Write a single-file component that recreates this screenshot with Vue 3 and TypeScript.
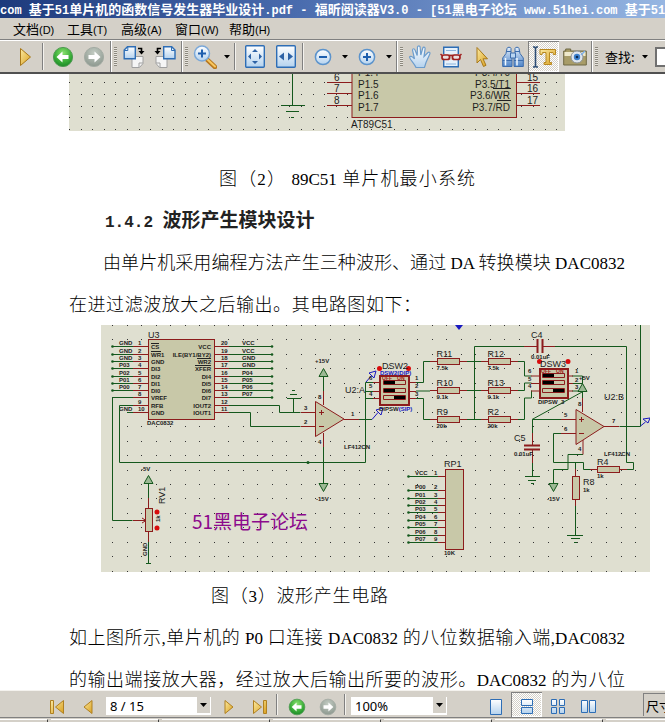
<script setup lang="ts">
import { ref } from 'vue'

interface Run { text: string; latin: boolean }
interface Pin { y: number; net?: string; num: string; name?: string }
interface Resistor { name: string; value: string; x: number; y: number }

// Splits mixed text so that Latin and Chinese runs can use different faces.
function runs(text: string): Run[] {
  return text
    .split(/([\x20-\x7e]+)/)
    .filter((part) => part.length > 0)
    .map((part) => ({ text: part, latin: /^[\x20-\x7e]/.test(part) }))
}

function dotGrid(x0: number, y0: number, stepX: number, stepY: number, cols: number, rows: number): string {
  let d = ''
  for (let r = 0; r < rows; r++) {
    for (let c = 0; c < cols; c++) {
      d += `M${Math.round(x0 + c * stepX)} ${Math.round(y0 + r * stepY)}h1v1h-1z`
    }
  }
  return d
}

const title = runs('com 基于51单片机的函数信号发生器毕业设计.pdf - 福昕阅读器V3.0 - [51黑电子论坛 www.51hei.com 基于51单片机的函数信号发生器毕业设计.pdf]')
const menus = ['文档(D)', '工具(T)', '高级(A)', '窗口(W)', '帮助(H)'].map(runs)

const captionOne = runs('图（2） 89C51 单片机最小系统')
const heading = runs('1.4.2 波形产生模块设计')
const lineOne = runs('由单片机采用编程方法产生三种波形、通过 DA 转换模块 DAC0832')
const lineTwo = runs('在进过滤波放大之后输出。其电路图如下：')
const captionTwo = runs('图（3）波形产生电路')
const lineThree = runs('如上图所示,单片机的 P0 口连接 DAC0832 的八位数据输入端,DAC0832')
const lineFour = runs('的输出端接放大器，经过放大后输出所要的波形。DAC0832 的为八位')

const page = ref('8 / 15')
const zoomLevel = ref('100%')
const query = ref('')

const dotsOne = dotGrid(69, 82, 11.6, 11.75, 43, 5)
const dotsTwo = dotGrid(112, 325, 14.53, 14.45, 37, 18)

const rows = [346.5, 354.5, 361.5, 368.5, 376.5, 383.5, 390.5, 397.5, 405.5, 412.5]
const leftNames = ['CS', 'WR1', 'GND', 'DI3', 'DI2', 'DI1', 'DI0', 'VREF', 'RFB', 'GND']
const leftNets = ['GND', 'GND', 'GND', 'P03', 'P02', 'P01', 'P00']
const rightNames = ['VCC', 'ILE(BY1/BY2)', 'WR2', 'XFER', 'DI4', 'DI5', 'DI6', 'DI7', 'IOUT2', 'IOUT1']
const rightNets = ['VCC', 'VCC', 'GND', 'GND', 'P04', 'P05', 'P06', 'P07']
const leftPins: Pin[] = rows.map((y, i) => ({ y, num: String(i + 1), name: leftNames[i], net: leftNets[i] }))
const rightPins: Pin[] = rows.map((y, i) => ({ y, num: String(20 - i), name: rightNames[i], net: rightNets[i] }))

const packYs = [476.5, 490.5, 498.5, 505.5, 512.5, 520.5, 527.5, 535.5, 542.5]
const packPins: Pin[] = packYs.map((y, i) => ({ y, num: String(i + 1), net: i === 0 ? 'VCC' : `P0${i - 1}` }))

const resistors: Resistor[] = [
  { name: 'R11', value: '7.5k', x: 437.5, y: 361.5 },
  { name: 'R10', value: '9.1k', x: 437.5, y: 390.5 },
  { name: 'R9', value: '20k', x: 437.5, y: 419.5 },
  { name: 'R12', value: '7.5k', x: 488.5, y: 361.5 },
  { name: 'R13', value: '9.1k', x: 488.5, y: 390.5 },
  { name: 'R2', value: '20k', x: 488.5, y: 419.5 },
]
const mcuLeft: Pin[] = [
  { y: 82.5, num: '6', name: 'P1.5' },
  { y: 93.5, num: '7', name: 'P1.6' },
  { y: 105.5, num: '8', name: 'P1.7' },
]
const mcuRight: Pin[] = [
  { y: 82.5, num: '15', name: 'P3.5/T1' },
  { y: 93.5, num: '16', name: 'P3.6/WR' },
  { y: 105.5, num: '17', name: 'P3.7/RD' },
]
</script>

<template>
  <div class="reader" lang="zh-CN">
    <svg class="defs" aria-hidden="true">
      <defs>
        <linearGradient id="gold" x1="0" y1="0" x2="1" y2="1"><stop offset="0" stop-color="#fbe9a0" /><stop offset="1" stop-color="#d9a020" /></linearGradient>
        <linearGradient id="ice" x1="0" y1="0" x2="0" y2="1"><stop offset="0" stop-color="#ffffff" /><stop offset="1" stop-color="#b4d2ee" /></linearGradient>
        <linearGradient id="steel" x1="0" y1="0" x2="0" y2="1"><stop offset="0" stop-color="#e4f0fc" /><stop offset="1" stop-color="#4f84c8" /></linearGradient>
        <radialGradient id="leaf" cx=".5" cy=".3" r=".7"><stop offset="0" stop-color="#8be070" /><stop offset=".6" stop-color="#3db03a" /><stop offset="1" stop-color="#1c8a28" /></radialGradient>
        <radialGradient id="ash" cx=".5" cy=".3" r=".7"><stop offset="0" stop-color="#c3ccc3" /><stop offset="1" stop-color="#8d988f" /></radialGradient>
        <symbol id="i-back" viewBox="0 0 22 22"><circle cx="11" cy="11" r="9.6" fill="url(#leaf)" stroke="#4f9a52" /><path d="M4.500 11l6-5.500v3.500h6v4h-6v3.500z" fill="#fff" /></symbol>
        <symbol id="i-forward" viewBox="0 0 22 22"><circle cx="11" cy="11" r="9.600" fill="url(#ash)" stroke="#a3aba3" /><path d="M17.500 11l-6-5.500v3.500h-6v4h6v3.500z" fill="#fff" /></symbol>
        <symbol id="i-caret" viewBox="0 0 6 4"><path d="M0 0h6L3 3.500z" fill="#000" /></symbol>
      </defs>
    </svg>

    <header class="titlebar">
      <h1><span v-for="(r, i) in title" :key="i" :class="{ latin: r.latin }">{{ r.text }}</span></h1>
    </header>

    <nav class="menubar" aria-label="菜单">
      <button v-for="(m, i) in menus" :key="i" type="button"><span v-for="(r, j) in m" :key="j" :class="{ latin: r.latin }">{{ r.text }}</span></button>
    </nav>

    <div class="toolbar">
      <div class="group first">
        <button class="tool" type="button" aria-label="播放"><svg width="13" height="20" viewBox="0 0 13 20"><path d="M1.500 1.500v17l10-8.500z" fill="url(#gold)" stroke="#a87818" /></svg></button>
        <i class="sep"></i>
        <button class="tool" type="button" aria-label="后退"><svg width="22" height="22"><use href="#i-back" /></svg></button>
        <button class="tool" type="button" aria-label="前进"><svg width="22" height="22"><use href="#i-forward" /></svg></button>
      </div>
      <div class="group">
        <i class="grip"></i>
        <button class="tool" type="button" aria-label="顺时针旋转">
          <svg width="22" height="22" viewBox="0 0 22 22"><path d="M9 10.500h11v7l-3.500 4H9z" fill="#f5f5f5" stroke="#a0a0a0" /><path d="M20 17h-4v4" fill="none" stroke="#a0a0a0" /><path d="M4.500.7h7.800v12.100H1.200V4z" fill="url(#ice)" stroke="#2d6db5" stroke-width="1.400" /><path d="M1.200 4.500h3.600V1" fill="none" stroke="#2d6db5" /><path d="M15 2.500h3.500v3" fill="none" stroke="#000" stroke-width="1.600" /><path d="M15.500 5h6l-3 3.500z" /></svg>
        </button>
        <button class="tool" type="button" aria-label="逆时针旋转">
          <svg width="22" height="22" viewBox="0 0 22 22"><path d="M2 10.500h11v11H5.500l-3.500-4z" fill="#f5f5f5" stroke="#a0a0a0" /><path d="M2 17h4v4" fill="none" stroke="#a0a0a0" /><path d="M9.700.7h8l3.300 3.300v8.800H9.700z" fill="url(#ice)" stroke="#2d6db5" stroke-width="1.400" /><path d="M17.500 1v3.500H21" fill="none" stroke="#2d6db5" /><path d="M7 2.500H3.500v3" fill="none" stroke="#000" stroke-width="1.600" /><path d="M.5 5h6l-3 3.500z" /></svg>
        </button>
      </div>
      <div class="group">
        <i class="grip"></i>
        <button class="tool" type="button" aria-label="放大镜">
          <svg width="24" height="24" viewBox="0 0 24 24"><path d="M14 14.500l8 7.500" stroke="#b87820" stroke-width="4.500" stroke-linecap="round" /><path d="M15 15l7 6.500" stroke="#f8c860" stroke-width="2" stroke-linecap="round" /><circle cx="9" cy="8.500" r="7.500" fill="url(#ice)" stroke="#7ba8d8" stroke-width="1.500" /><path d="M5 8.500h8M9 4.500v8" stroke="#1e5fae" stroke-width="2" /></svg>
        </button>
        <button class="drop" type="button" aria-label="缩放选项"><svg width="6" height="4"><use href="#i-caret" /></svg></button>
        <i class="sep"></i>
        <button class="tool" type="button" aria-label="适合页面">
          <svg width="20" height="23" viewBox="0 0 20 23"><rect x=".7" y=".7" width="18.600" height="21.600" rx="1" fill="url(#ice)" stroke="#2d6db5" stroke-width="1.400" /><path d="M10 4l3 3H7zM10 19l3-3H7zM3 11.500l3-3v6zM17 11.500l-3-3v6z" fill="#2d62a5" /></svg>
        </button>
        <button class="tool" type="button" aria-label="适合宽度">
          <svg width="20" height="23" viewBox="0 0 20 23"><rect x=".7" y=".7" width="18.600" height="21.600" rx="1" fill="url(#ice)" stroke="#2d6db5" stroke-width="1.400" /><path d="M3 11.500l5-4v8zM17 11.500l-5-4v8z" fill="#2d62a5" /></svg>
        </button>
        <i class="sep"></i>
        <button class="tool" type="button" aria-label="缩小"><svg width="18" height="18" viewBox="0 0 18 18"><circle cx="9" cy="9" r="7.600" fill="url(#ice)" stroke="#5b93cc" stroke-width="1.500" /><path d="M5 9h8" stroke="#1e5fae" stroke-width="2" /></svg></button>
        <button class="drop" type="button" aria-label="缩小选项"><svg width="6" height="4"><use href="#i-caret" /></svg></button>
        <button class="tool" type="button" aria-label="放大"><svg width="18" height="18" viewBox="0 0 18 18"><circle cx="9" cy="9" r="7.600" fill="url(#ice)" stroke="#5b93cc" stroke-width="1.500" /><path d="M5 9h8M9 5v8" stroke="#1e5fae" stroke-width="2" /></svg></button>
        <button class="drop" type="button" aria-label="放大选项"><svg width="6" height="4"><use href="#i-caret" /></svg></button>
      </div>
      <div class="group">
        <i class="grip"></i>
        <button class="tool" type="button" aria-label="手形工具">
          <svg width="24" height="24" viewBox="0 0 24 24"><path d="M8 22.500C6 18 2 15 1.500 12c.8-1.500 3-.5 5 2L4.500 5c.3-1.800 2-1.500 2.500 0l2.200 5.500L9.500 2c.5-1.600 2.200-1.600 2.600 0l.7 8 2-7c.6-1.500 2.300-1.200 2.300.5L16 11.500l4-4c1.300-1 2.500.2 1.800 1.500L18 17.500l-1.500 5z" fill="url(#ice)" stroke="#6c9ccc" stroke-width="1.200" /></svg>
        </button>
        <button class="tool" type="button" aria-label="阅读模式">
          <svg width="22" height="22" viewBox="0 0 22 22"><path d="M3.700 8V1.200h14.600V8M3.700 14v6.800h14.600V14" fill="#e6f1fb" stroke="#2d6db5" stroke-width="1.400" /><path d="M6 4.500h10M6 18h10" stroke="#8cb4dc" /><rect x="2" y="9" width="7.500" height="4.500" rx="2" fill="#e8e0e0" stroke="#a02020" stroke-width="1.700" /><rect x="12.500" y="9" width="7.500" height="4.500" rx="2" fill="#e8e0e0" stroke="#a02020" stroke-width="1.700" /><path d="M9 9.500h4M2 9.500L.500 8M20 9.500L21.500 8" stroke="#a02020" stroke-width="1.500" /></svg>
        </button>
        <button class="tool" type="button" aria-label="选择工具"><svg width="14" height="22" viewBox="0 0 14 22"><path d="M2 1.500v15.500l3.500-3.500 3 7 2.500-1.200-3-6.500h4.500z" fill="url(#gold)" stroke="#a87818" /></svg></button>
        <button class="tool" type="button" aria-label="搜索">
          <svg width="22" height="22" viewBox="0 0 22 22"><path d="M5 2.500C5 .8 9 .8 9 2.500V7l1 3v10.500H.700V12L4 7.500zM17 2.500C17 .8 13 .8 13 2.500V7l-1 3v10.500h9.300V12L18 7.500z" fill="url(#steel)" stroke="#3c6cac" /><path d="M8.500 7h5v5h-5z" fill="#b9d5f2" stroke="#3c6cac" /><path d="M4.500 5.500h4.500M13 5.500h4.500M.700 14.500h9.300M12 14.500h9.300" stroke="#3c6cac" /><path d="M3.500 12v7.500M15 12v7.500" stroke="#f4faff" stroke-width="1.500" /></svg>
        </button>
        <button class="tool on" type="button" aria-label="选择文本">
          <svg width="26" height="24" viewBox="0 0 26 24"><path d="M2 2h1.500l1 1 1-1H7M4.500 3v18M2 22h1.500l1-1 1 1H7" fill="none" stroke="#2c4c74" stroke-width="1.600" /><path d="M9 4.500h15.500v5h-2l-.5-2h-3.500v10h2v2h-7.500v-2h2V7.500H11.500l-.5 2H9z" fill="url(#gold)" stroke="#b88820" /></svg>
        </button>
        <button class="tool" type="button" aria-label="快照">
          <svg width="24" height="20" viewBox="0 0 24 20"><path d="M.7 4h2V2h5v2h15.600v14H.7z" fill="#a89c68" stroke="#6e6844" /><path d="M1.500 5h21v4h-21z" fill="#efe9cc" /><circle cx="14" cy="10" r="6" fill="#dfe6ee" stroke="#8e9498" /><circle cx="14" cy="10" r="3.200" fill="#3c80cc" /><circle cx="14" cy="10" r="1.300" fill="#0c2850" /><path d="M18 8l4-4" stroke="#7cb0ec" stroke-width="1.500" /></svg>
        </button>
      </div>
      <div class="group search">
        <i class="grip"></i>
        <label for="query">查找:</label>
        <button class="drop" type="button" aria-label="查找选项"><svg width="6" height="4"><use href="#i-caret" /></svg></button>
        <input id="query" v-model="query" type="text" />
      </div>
    </div>

    <main>
      <article class="paper">
        <figure>
          <svg class="drawing" width="496" height="57" viewBox="69 74 496 57" role="img" aria-label="89C51 单片机最小系统电路">
            <rect x="69" y="74" width="496" height="57" fill="#dfdfd0" />
            <path :d="dotsOne" fill="#333" />
            <rect x="352" y="60" width="164.500" height="57.500" class="part" />
            <path class="wire" d="M292.500 74v31.500M281 105.500h24M286 111.500h13M291 117.500h3" />
            <text class="t10" x="358" y="76">P1.4</text>
            <text class="t10 end" x="510" y="76">P3.4/T0</text>
            <g v-for="p in mcuLeft" :key="p.num">
              <path class="lead" :d="`M327 ${p.y}h25`" />
              <text class="t10" x="334" :y="p.y - 2">{{ p.num }}</text>
              <text class="t10" x="358" :y="p.y + 5">{{ p.name }}</text>
            </g>
            <g v-for="p in mcuRight" :key="p.num">
              <path class="lead" :d="`M517 ${p.y}h23`" />
              <text class="t10" x="527" :y="p.y - 2">{{ p.num }}</text>
              <text class="t10 end" x="510" :y="p.y + 5">{{ p.name }}</text>
            </g>
            <path d="M493 88.500h18M497 100.500h14" stroke="#222" />
            <text class="t10" x="351" y="128">AT89C51</text>
          </svg>
          <figcaption class="line cap-one"><span v-for="(r, i) in captionOne" :key="i" :class="{ latin: r.latin }">{{ r.text }}</span></figcaption>
        </figure>

        <h2 class="line"><span v-for="(r, i) in heading" :key="i" :class="{ latin: r.latin }">{{ r.text }}</span></h2>
        <p class="line indent"><span v-for="(r, i) in lineOne" :key="i" :class="{ latin: r.latin }">{{ r.text }}</span></p>
        <p class="line short"><span v-for="(r, i) in lineTwo" :key="i" :class="{ latin: r.latin }">{{ r.text }}</span></p>

        <figure class="circuit">
          <svg class="drawing" width="549" height="247" viewBox="101 325 549 247" role="img" aria-label="波形产生电路">
            <rect x="101" y="325" width="549" height="247" fill="#dfdfd0" />
            <path :d="dotsTwo" fill="#333" />

            <!-- DAC0832 -->
            <rect x="148.500" y="339.500" width="66" height="80" class="part" />
            <text class="t9" x="148" y="338">U3</text>
            <text class="t6" x="147" y="425">DAC0832</text>
            <g v-for="p in leftPins" :key="'l' + p.num">
              <path class="lead" :d="`M133 ${p.y}h15`" />
              <text class="t6" x="138" :y="p.y - 2">{{ p.num }}</text>
              <text class="t6" x="151" :y="p.y + 2">{{ p.name }}</text>
              <template v-if="p.net">
                <path class="wire" :d="`M112 ${p.y}h21`" />
                <circle cx="112.500" :cy="p.y" r="1.300" fill="#14581c" />
                <text class="t6" x="119" :y="p.y - 2">{{ p.net }}</text>
              </template>
            </g>
            <g v-for="p in rightPins" :key="'r' + p.num">
              <path class="lead" :d="`M215 ${p.y}h14`" />
              <text class="t6" x="221" :y="p.y - 2">{{ p.num }}</text>
              <text class="t6 end" x="211" :y="p.y + 2">{{ p.name }}</text>
              <template v-if="p.net">
                <path class="wire" :d="`M229 ${p.y}h43`" />
                <circle cx="272" :cy="p.y" r="1.300" fill="#14581c" />
                <text class="t6" x="242" :y="p.y - 2">{{ p.net }}</text>
              </template>
            </g>
            <path d="M151 343.500h8M151 351.500h10M197 358.500h14M195 365.500h16" stroke="#222" />
            <text class="t6" x="119" y="411">GND</text>

            <!-- wiring -->
            <path class="wire" d="M133 397.500h-20.500V520.500h20M133 405.500h-13.500V462.500h246V382.500h8M127 412.500h6M229 405.500h50.500v7h21M229 412.500h21.500v14h50M293.500 412v-14M287 398.500h14M290 394.500h7M292 390.500h3M365.500 391.500h8M365.500 398.500h8" />
            <circle cx="308" cy="462.500" r="1.500" fill="#14581c" />
            <path class="wire" d="M323.500 376v15M323.500 447v36M359 419.500h13M416 382.500h7.500v-21h7M416 391h14M416 398.500h7.500v21h7M467 361.500h14M467 390.500h14M467 419.500h14M474.500 419.500V346.500h50M555 346.500h71.500v116h7v7h-7M518 361.500h6.500v14.500h7M518 390.500h6.500v-7.500h7M518 419.500h6.500v-21.500h7v-7.500h0" />
            <path class="wire" d="M640.500 325v101.500h-21M582.500 376v22M572 376h10.500M572 383.500h10.500M572 391h10.500M583 391.500l-51 28M561 419.500h-28.500v14M561 433.500h-7.500v29h30v7h7M583 454.500h-15v15h-14.500v14M532.500 463v13.500M525 476.500h15M528 480.500h8M531 483.500h3M575.500 506v29M567 535.500h16M571 538.500h9M574 542.500h3M148.500 484v14M148.500 542v21M146 563.500h5M575.500 462v7" />
            <path class="lead" d="M301 412.500h15M301 426.500h15M323.500 391v14M323.500 433v14M344 419.500h15M373 382.500h7M373 391.500h7M373 398.500h7M409 382.500h7M409 391.500h7M409 398.500h7M430 361.500h8M430 390.500h8M430 419.500h8M460 361.500h7M460 390.500h7M460 419.500h7M481 361.500h8M481 390.500h8M481 419.500h8M511 361.500h7M511 390.500h7M511 419.500h7M524 346.500h13M543 346.500h12M531 376h9M531 383.500h9M531 391h9M568 376h5M568 383.500h5M568 391h5" />
            <path class="lead" d="M561 419.500h15M561 433.500h15M604 426.500h15M582.500 398v14M583 440v14.500M532.500 433v12M532.500 450v13M590 469.500h8M619 469.500h8M575.500 469v8M575.500 499v7M133 520.500h12M148.500 498v11M148.500 532v10M142 518l4 2.500-4 2.500" />
            <path d="M537.500 339v14M542.500 339v14M524 445.500h16M524 449.500h16" stroke="#8c1c1c" stroke-width="2" />

            <!-- supply arrows -->
            <path class="arrow" d="M319 376.500h9l-4.500-8zM319 483.500h9l-4.500 8zM144 483.500h9l-4.500-8zM578 391.500h9l-4.500-8zM549 483.500h9l-4.500 8z" />

            <!-- operational amplifiers -->
            <path class="part" d="M315.500 401.500v35l28.500-17.500zM576 409.500v35l28-18z" />
            <path d="M319 412.500h5M321.500 410v5M319 426.500h5M579 419.500h5M581.500 417v5M579 433.500h5" stroke="#8c1c1c" />

            <!-- resistors -->
            <g v-for="r in resistors" :key="r.name">
              <rect class="part" :x="r.x" :y="r.y - 3" width="22" height="6" />
              <text class="t9" :x="r.x - 1" :y="r.y - 5">{{ r.name }}</text>
              <text class="t6" :x="r.x - 1" :y="r.y + 8">{{ r.value }}</text>
            </g>
            <rect class="part" x="597.500" y="466.500" width="22" height="6" />
            <rect class="part" x="572.500" y="476.500" width="7" height="23" />
            <rect class="part" x="145.500" y="508.500" width="7" height="23" />

            <!-- DIP switches -->
            <g>
              <rect class="part thick" x="380" y="376" width="29" height="29" />
              <path class="part" d="M383.500 380.500h22v4h-22zM383.500 388.500h22v4h-22zM383.500 395.500h22v4h-22z" />
              <path d="M384 381h11v3h-11zM384 389h11v3h-11zM394 396h11v3h-11z" />
              <text class="t5 red" x="382" y="380">OFF</text><text class="t5 red" x="397" y="380">ON</text>
            </g>
            <g>
              <rect class="part thick" x="540" y="369" width="28" height="29" />
              <path class="part" d="M542.500 373.500h22v4h-22zM542.500 380.500h22v4h-22zM542.500 388.500h22v4h-22z" />
              <path d="M543 374h11v3h-11zM543 381h11v3h-11zM553 389h11v3h-11z" />
              <text class="t5 red" x="541" y="373">OFF</text><text class="t5 red" x="556" y="373">ON</text>
            </g>
            <path d="M379.500 368.500h0M408.500 368.500h0M539.500 361.500h0M568 361.500h0M157 512h0M157 528h0" stroke="#d80c0c" stroke-width="5" stroke-linecap="round" />

            <!-- resistor pack -->
            <rect class="part" x="445.500" y="469.500" width="18" height="80" />
            <g v-for="p in packPins" :key="'p' + p.num">
              <path class="wire" :d="`M408 ${p.y}h30`" />
              <path class="lead" :d="`M438 ${p.y}h7`" />
              <circle cx="408.500" :cy="p.y" r="1.300" fill="#14581c" />
              <text class="t6" x="415" :y="p.y - 2">{{ p.net }}</text>
              <text class="t6" x="434" :y="p.y - 2">{{ p.num }}</text>
            </g>

            <!-- probes -->
            <path d="M366 382l6-7M369 373l7-2-2 7zM372 419.500l6-7M376 410l7-2-2 7zM640.500 426l5-4M643 419l7-1-2 5z" fill="none" stroke="#1818c0" />
            <path d="M455 325h8l-4 5z" fill="#1818c0" />

            <!-- labels -->
            <text class="t9" x="382" y="369">DSW2</text>
            <text class="t6 blue" x="380" y="375">DSW2(DIP)</text>
            <text class="t6" x="379" y="411">DIPSW<tspan class="blue">(SIP)</tspan></text>
            <text class="t9" x="345" y="393">U2:A</text>
            <text class="t9" x="604" y="400">U2:B</text>
            <text class="t9" x="531" y="338">C4</text>
            <text class="t6" x="531" y="359">0.01uF</text>
            <text class="t9" x="540" y="367">DSW3</text>
            <text class="t6" x="538" y="404">DIPSW_3</text>
            <text class="t9" x="514" y="441">C5</text>
            <text class="t6" x="514" y="456">0.01uF</text>
            <text class="t9" x="597" y="465">R4</text>
            <text class="t6" x="597" y="478">1k</text>
            <text class="t9" x="583" y="485">R8</text>
            <text class="t6" x="583" y="492">1k</text>
            <text class="t9" x="444" y="467">RP1</text>
            <text class="t6" x="444" y="555">10K</text>
            <text class="t6" x="344" y="449">LF412CN</text>
            <text class="t6" x="604" y="456">LF412CN</text>
            <text class="t6" x="315" y="363">+15V</text>
            <text class="t6" x="316" y="501">-15V</text>
            <text class="t6" x="579" y="380">+5V</text>
            <text class="t6" x="547" y="501">-15V</text>
            <text class="t6" x="141" y="471">-5V</text>
            <text class="t6" x="304" y="410">3</text><text class="t6" x="304" y="424">2</text><text class="t6" x="351" y="416">1</text>
            <text class="t6" x="318" y="399">8</text><text class="t6" x="318" y="444">4</text>
            <text class="t6" x="369" y="380">6</text><text class="t6" x="369" y="388">5</text><text class="t6" x="369" y="396">4</text>
            <text class="t6" x="415" y="380">1</text><text class="t6" x="415" y="388">2</text><text class="t6" x="415" y="396">3</text>
            <text class="t6" x="528" y="373">6</text><text class="t6" x="528" y="381">5</text><text class="t6" x="528" y="388">4</text>
            <text class="t6" x="575" y="373">1</text><text class="t6" x="575" y="382">2</text><text class="t6" x="575" y="389">3</text>
            <text class="t6" x="564" y="417">5</text><text class="t6" x="564" y="431">6</text><text class="t6" x="612" y="423">7</text>
            <text class="t6" x="578" y="406">8</text><text class="t6" x="578" y="451">4</text>
            <text class="t9" transform="translate(165 504) rotate(-90)">RV1</text>
            <text class="t6" transform="translate(160 522) rotate(-90)">1k</text>
            <text class="t6" transform="translate(147 556) rotate(-90)">GND</text>
            <text class="mark" x="192" y="529">51黑电子论坛</text>
          </svg>
          <figcaption class="line cap-two"><span v-for="(r, i) in captionTwo" :key="i" :class="{ latin: r.latin }">{{ r.text }}</span></figcaption>
        </figure>

        <p class="line"><span v-for="(r, i) in lineThree" :key="i" :class="{ latin: r.latin }">{{ r.text }}</span></p>
        <p class="line"><span v-for="(r, i) in lineFour" :key="i" :class="{ latin: r.latin }">{{ r.text }}</span></p>
      </article>
    </main>

    <footer>
      <div class="pager">
        <button class="tool" type="button" aria-label="第一页"><svg width="16" height="16" viewBox="0 0 16 16"><path d="M1.500 1.500h3v13h-3zM14.500 1.500v13L6.500 8z" fill="url(#gold)" stroke="#b08020" /></svg></button>
        <button class="tool" type="button" aria-label="上一页"><svg width="10" height="16" viewBox="0 0 10 16"><path d="M9 1.500v13L1 8z" fill="url(#gold)" stroke="#b08020" /></svg></button>
        <span class="combo page">
          <select v-model="page" aria-label="页码"><option>8 / 15</option><option>9 / 15</option></select>
          <svg class="arrowbox" width="13" height="16" viewBox="0 0 13 16"><path d="M0 0h13v16H0z" fill="#d4d0c8" /><path d="M3 6h7L6.500 10z" /></svg>
        </span>
        <button class="tool" type="button" aria-label="下一页"><svg width="10" height="16" viewBox="0 0 10 16"><path d="M1 1.500v13L9 8z" fill="url(#gold)" stroke="#b08020" /></svg></button>
        <button class="tool" type="button" aria-label="最后一页"><svg width="16" height="16" viewBox="0 0 16 16"><path d="M11.500 1.500h3v13h-3zM1.500 1.500v13L9.500 8z" fill="url(#gold)" stroke="#b08020" /></svg></button>
        <i class="sep"></i>
        <button class="tool" type="button" aria-label="后退"><svg width="18" height="18"><use href="#i-back" /></svg></button>
        <button class="tool" type="button" aria-label="前进"><svg width="18" height="18"><use href="#i-forward" /></svg></button>
        <i class="sep"></i>
        <span class="combo scale">
          <select v-model="zoomLevel" aria-label="缩放比例"><option>100%</option><option>125%</option></select>
          <svg class="arrowbox" width="13" height="16" viewBox="0 0 13 16"><path d="M0 0h13v16H0z" fill="#d4d0c8" /><path d="M3 6h7L6.500 10z" /></svg>
        </span>
        <div class="views">
          <button class="tool" type="button" aria-label="单页"><svg width="14" height="16" viewBox="0 0 14 16"><path class="leaf" d="M1.500.5h11v15h-11z" /></svg></button>
          <button class="tool on" type="button" aria-label="连续"><svg width="14" height="16" viewBox="0 0 14 16"><path class="leaf" d="M1.500.5h11v6h-11zM1.500 8.500h11v6h-11z" /></svg></button>
          <button class="tool" type="button" aria-label="连续对开"><svg width="14" height="16" viewBox="0 0 14 16"><path class="leaf" d="M.5.500h5v6h-5zM8.500.500h5v6h-5zM.5 8.500h5v6h-5zM8.500 8.500h5v6h-5z" /></svg></button>
          <button class="tool" type="button" aria-label="对开"><svg width="16" height="16" viewBox="0 0 16 16"><path class="leaf" d="M.5 1.500h6v12h-6zM8.500 1.500h6v12h-6z" /></svg></button>
        </div>
        <button class="size" type="button">尺寸</button>
      </div>
      <div class="tasks"><i v-for="n in 7" :key="n"></i></div>
    </footer>
  </div>
</template>

<style>
body {
  overflow: hidden;
  background: #d4d0c8;
}
</style>

<style scoped>
.reader {
  display: flex;
  flex-direction: column;
  height: 100vh;
  background: #d4d0c8;
  color: #000;
  font-family: "Noto Sans CJK SC", sans-serif;
  font-size: 13px;
}
.defs { position: absolute; width: 0; height: 0; }
button {
  display: flex;
  align-items: center;
  justify-content: center;
  padding: 0;
  border: 0;
  background: none;
  color: inherit;
  font: inherit;
  flex: none;
}
.titlebar {
  flex: none;
  height: 18px;
  overflow: hidden;
  background: linear-gradient(90deg, #1d3a7c, #4a6cae 45%, #96b6e2);
  color: #fff;
}
h1 {
  margin: 0;
  font-size: 13px;
  line-height: 18px;
  font-weight: 700;
  white-space: pre;
}
.titlebar .latin { font-family: "Liberation Mono", monospace; font-size: 12px; }
.menubar {
  flex: none;
  display: flex;
  gap: 10px;
  height: 21px;
  padding-left: 13px;
  border-bottom: 1px solid #808080;
}
.menubar button { min-width: 44px; justify-content: flex-start; align-items: baseline; line-height: 21px; }
.menubar .latin { font-family: "Liberation Sans", sans-serif; font-size: 11px; }
.toolbar {
  flex: none;
  display: flex;
  height: 31px;
  overflow: hidden;
  border-top: 1px solid #fff;
  border-bottom: 2px solid #505050;
}
.group {
  flex: none;
  display: flex;
  align-items: stretch;
  padding-right: 1px;
  border-left: 1px solid #fff;
  border-right: 1px solid #808080;
}
.group.first { padding-left: 10px; border-left: 0; }
.grip {
  width: 3px;
  margin: 6px 1px 6px 2px;
  background: repeating-linear-gradient(#8c887e 0 1px, #e8e6e0 1px 2px);
}
.sep {
  flex: none;
  width: 1px;
  margin: 2px 3px 2px 1px;
  border-left: 1px solid #808080;
  background: #f4f2ee;
}
.tool { width: 31px; }
.tool.on {
  background: repeating-conic-gradient(#d4d0c8 0 25%, #fff 0 50%) 0 0 / 2px 2px;
  box-shadow: inset 1px 1px #808080, inset -1px -1px #fff;
}
.drop { width: 13px; }
.group.search { flex: 1; align-items: center; border-right: 0; }
.search .grip { align-self: stretch; }
.search label { margin: 0 4px 0 6px; white-space: nowrap; }
.search input {
  flex: 1;
  min-width: 60px;
  height: 20px;
  margin-left: 3px;
  box-sizing: border-box;
  border: 2px solid #707070;
  background: #fff;
}
main {
  flex: 1;
  min-height: 0;
  overflow: hidden;
  background: #fff;
}
.paper { padding: 0 40px 0 69px; }
figure { margin: 0; }
figure.circuit { padding-top: 1px; }
.drawing { display: block; margin-bottom: 25px; }
.circuit .drawing { margin: 0 0 1px 32px; overflow: hidden; }
.line {
  margin: 0;
  font-size: 18px;
  line-height: 42px;
  height: 42px;
  font-weight: 300;
  white-space: nowrap;
  text-align: justify;
  text-align-last: justify;
}
.line .latin { font-family: "Liberation Serif", serif; font-size: 17px; }
h2.line { padding-left: 36px; font-size: 19px; font-weight: 700; text-align-last: left; color: #222; }
h2.line .latin { font-family: "Liberation Mono", monospace; font-size: 16px; }
.indent { padding-left: 34px; }
.short { max-width: 352px; }
.cap-one { width: 256px; margin: 0 auto; }
.cap-two { width: 177px; margin-left: 142px; }

.drawing text { font-family: "Liberation Sans", sans-serif; fill: #1c1c1c; }
.drawing .t10 { font-size: 10px; }
.drawing .t9 { font-size: 9px; }
.drawing .t6 { font-size: 6px; font-weight: 700; }
.drawing .t5 { font-size: 5px; font-weight: 700; }
.drawing .end { text-anchor: end; }
.drawing .red { fill: #a01818; }
.drawing .blue { fill: #1818c0; }
.drawing .mark { fill: #8c0a8c; font-family: "Noto Sans CJK SC", sans-serif; font-size: 19px; }
.wire { fill: none; stroke: #14581c; }
.lead { fill: none; stroke: #8c1c1c; }
.part { fill: #c8c8a8; stroke: #8c1c1c; }
.thick { stroke-width: 2; }
.arrow { fill: #9cb894; stroke: #14581c; }

footer { flex: none; background: #d4d0c8; }
.pager {
  display: flex;
  height: 25px;
  overflow: hidden;
  padding: 1px 0 0 41px;
  border-top: 1px solid #f4f2ee;
  border-bottom: 1px solid #808080;
}
.pager .tool { padding-top: 4px; }
.combo { position: relative; flex: none; height: 18px; margin-top: 4px; }
.combo.page { width: 105px; margin-left: 3px; margin-right: 2px; }
.combo.scale { width: 96px; margin-left: 2px; }
.combo select {
  appearance: none;
  width: 100%;
  height: 18px;
  padding: 0 16px 0 4px;
  border: 0;
  border-radius: 0;
  background: #fff;
  color: #000;
  font-family: "Noto Sans", sans-serif;
  font-size: 13px;
  line-height: 18px;
}
.arrowbox { position: absolute; top: 1px; right: 1px; pointer-events: none; }
.views { display: flex; margin-left: 33px; }
.leaf { fill: url(#ice); stroke: #2d6db5; }
.size {
  flex: 1 0 auto;
  justify-content: flex-start;
  margin: 1px 0 1px 39px;
  border-top: 1px solid #808080;
  border-left: 1px solid #808080;
  padding-left: 2px;
  white-space: nowrap;
}
.tasks { display: flex; gap: 3px; height: 4px; margin-left: -60px; overflow: hidden; }
.tasks i {
  flex: none;
  width: 108px;
  height: 3px;
  margin-top: 1px;
  border-top: 1px solid #fff;
  border-right: 1px solid #404040;
  box-sizing: border-box;
}
</style>
